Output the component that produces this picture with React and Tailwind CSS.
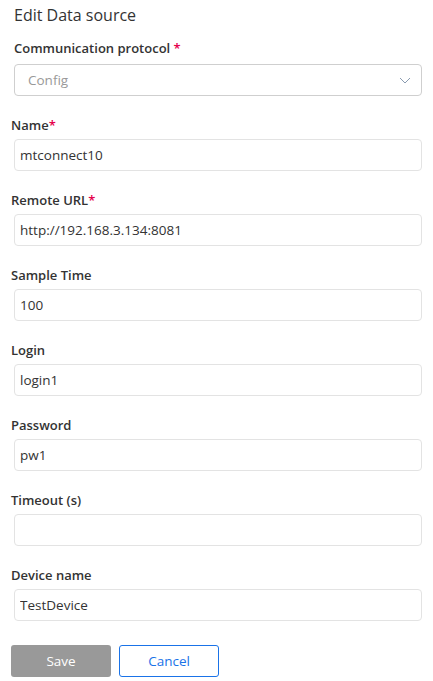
import React from 'react';

const fields = [
  { label: 'Name', required: true, value: 'mtconnect10' },
  { label: 'Remote URL', required: true, value: 'http://192.168.3.134:8081' },
  { label: 'Sample Time', value: '100' },
  { label: 'Login', value: 'login1' },
  { label: 'Password', value: 'pw1' },
  { label: 'Timeout (s)', value: '' },
  { label: 'Device name', value: 'TestDevice' },
];

const Field = ({ label, required, value }) => (
  <div className="mt-[19px]">
    <div className="h-[20px] leading-[20px] text-[13px] font-semibold text-[#333]">
      {label}
      {required && <span className="text-[#e5004b]">*</span>}
    </div>
    <input
      type="text"
      defaultValue={value}
      className="mt-[4px] ml-[3px] w-[408px] h-[32px] px-[5px] border border-[#e3e3e3] rounded-[4px] text-[13.5px] text-[#333] bg-white outline-none"
    />
  </div>
);

const App = () => {
  return (
    <div className="w-[433px] min-h-[681px] bg-white px-[11px] pt-[5px] font-['Open_Sans',sans-serif]">
      {/* Titre */}
      <h1 className="ml-[3px] h-[20px] leading-[20px] text-[16px] font-normal text-[#333]">Edit Data source</h1>

      {/* Protocole */}
      <div className="mt-[13px] ml-[3px]">
        <div className="h-[20px] leading-[20px] text-[13px] font-semibold text-[#333]">
          Communication protocol <span className="text-[#e5004b]">*</span>
        </div>
        <div className="mt-[6px] w-[408px] h-[32px] flex items-center justify-between pl-[13px] pr-[10px] border border-[#cfcfcf] rounded-[4px]">
          <span className="text-[13.5px] text-[#999]">Config</span>
          <svg width="12" height="7" viewBox="0 0 12 7" fill="none">
            <path d="M1 1l5 5 5-5" stroke="#8a9bb0" strokeWidth="1" />
          </svg>
        </div>
      </div>

      {fields.map((f) => (
        <Field key={f.label} {...f} />
      ))}

      {/* Boutons */}
      <div className="flex gap-[8px] mt-[24px]">
        <button className="w-[100px] h-[32px] rounded-[3px] bg-[#999] text-white text-[13.5px]">Save</button>
        <button className="w-[100px] h-[32px] rounded-[3px] border border-[#1a73e8] text-[#1a73e8] text-[13.5px] bg-white">
          Cancel
        </button>
      </div>
    </div>
  );
};

export default App;
